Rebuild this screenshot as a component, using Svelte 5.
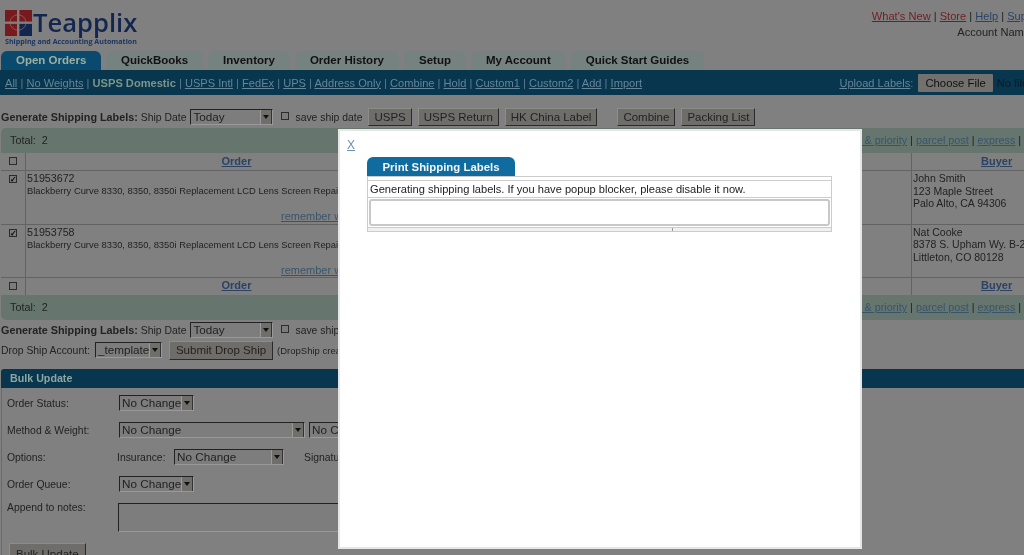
<script>
	const navLinks = ['USPS Intl', 'FedEx', 'UPS', 'Address Only', 'Combine', 'Hold', 'Custom1', 'Custom2', 'Add', 'Import'];
	const tabs = ['QuickBooks', 'Inventory', 'Order History', 'Setup', 'My Account', 'Quick Start Guides'];
	const orders = [
		{ id: '51953672', buyer: ['John Smith', '123 Maple Street', 'Palo Alto, CA 94306'] },
		{ id: '51953758', buyer: ['Nat Cooke', '8378 S. Upham Wy. B-201', 'Littleton, CO 80128'] }
	];
</script>

{#snippet select(label, size)}
	<span class="sel {size}"><span class="sel-text">{label}</span><span class="sel-btn"></span></span>
{/snippet}

{#snippet shipRow()}
	<b>Generate Shipping Labels:</b> <span class="ship-date">Ship Date</span>
	{@render select('Today', 'today')}
	<span class="check save"></span><span class="save-text">save ship date</span>
{/snippet}

{#snippet totalBar(cls)}
	<div class="total {cls}">
		<span>Total:&nbsp; 2</span>
		<span class="filters"><a href="#f">first &amp; priority</a> | <a href="#p">parcel post</a> | <a href="#e">express</a> | <a href="#a">all</a></span>
	</div>
{/snippet}

<div class="frame">
	<div class="page">
		<header class="top">
			<div class="logo">
				<div class="logo-main">
					<svg width="27" height="26" viewBox="0 0 27 27" preserveAspectRatio="none" aria-hidden="true">
						<rect width="27" height="27" fill="#761a1d" />
						<rect x="14" y="14" width="13" height="13" fill="#12264e" />
						<circle cx="13" cy="13" r="8" fill="none" stroke="#a77" stroke-width="0.6" />
						<rect x="12" width="2.4" height="27" fill="#808080" />
						<rect y="12" width="27" height="2.4" fill="#808080" />
					</svg>
					<span class="logo-name">Teapplix</span>
				</div>
				<div class="logo-tag">Shipping and Accounting Automation</div>
			</div>
			<div class="top-links">
				<div><a class="red" href="#n">What's New</a> | <a class="red" href="#s">Store</a> | <a href="#h">Help</a> | <a href="#u">Support</a></div>
				<div class="account">Account Name</div>
			</div>
		</header>

		<nav class="tabs">
			<span class="tab active">Open Orders</span>
			{#each tabs as tab}
				<span class="tab">{tab}</span>
			{/each}
		</nav>

		<div class="subnav">
			<div>
				<a href="#all">All</a> | <a href="#nw">No Weights</a> | <b>USPS Domestic</b>
				{#each navLinks as link}
					| <a href="#l">{link}</a>{' '}
				{/each}
			</div>
			<div class="upload">
				<span><a href="#up">Upload Labels</a>:</span> <span class="file-btn">Choose File</span> <span class="no-file">No file chosen</span>
			</div>
		</div>

		<div class="ship first">
			{@render shipRow()}
			<span class="btn">USPS</span>
			<span class="btn">USPS Return</span>
			<span class="btn">HK China Label</span>
			<span class="btn combine">Combine</span>
			<span class="btn">Packing List</span>
		</div>

		{@render totalBar('upper')}

		<div class="grid head">
			<div class="cell box"><span class="check"></span></div>
			<div class="cell title"><a href="#o">Order</a></div>
			<div class="cell"></div>
			<div class="cell title"><a href="#b">Buyer</a></div>
		</div>
		{#each orders as order}
			<div class="grid row">
				<div class="cell box"><span class="check on">✓</span></div>
				<div class="cell info">
					<div>{order.id}</div>
					<div class="small">Blackberry Curve 8330, 8350, 8350i Replacement LCD Lens Screen Repair Part</div>
					<a class="remember" href="#r">remember weight</a>
				</div>
				<div class="cell"></div>
				<div class="cell buyer">
					{#each order.buyer as line}
						<div>{line}</div>
					{/each}
				</div>
			</div>
		{/each}
		<div class="grid head foot">
			<div class="cell box"><span class="check"></span></div>
			<div class="cell title"><a href="#o">Order</a></div>
			<div class="cell"></div>
			<div class="cell title"><a href="#b">Buyer</a></div>
		</div>

		{@render totalBar('lower')}

		<div class="ship second">
			{@render shipRow()}
		</div>
		<div class="drop">
			<span>Drop Ship Account:</span>
			{@render select('_template', 'tpl')}
			<span class="btn submit">Submit Drop Ship</span>
			<span class="tiny">(DropShip creates orders with the supplier)</span>
		</div>

		<div class="bulk-title">Bulk Update</div>
		<div class="bulk">
			<div class="bulk-row">
				<span class="lbl">Order Status:</span>
				{@render select('No Change', 'nc')}
			</div>
			<div class="bulk-row">
				<span class="lbl">Method &amp; Weight:</span>
				{@render select('No Change', 'method')}
				{@render select('No Change', 'nc')}
			</div>
			<div class="bulk-row">
				<span class="lbl">Options:</span>
				<span class="ins">Insurance:</span>
				{@render select('No Change', 'insure')}
				<span class="sig">Signature:</span>
			</div>
			<div class="bulk-row">
				<span class="lbl">Order Queue:</span>
				{@render select('No Change', 'nc')}
			</div>
			<div class="bulk-row notes">
				<span class="lbl">Append to notes:</span>
				<span class="area"></span>
			</div>
			<span class="btn bulk-btn">Bulk Update</span>
		</div>
	</div>

	<div class="modal">
		<a class="close" href="#x">X</a>
		<div class="panel">
			<div class="panel-tab">Print Shipping Labels</div>
			<div class="panel-body">
				<div class="panel-cap"></div>
				<div class="panel-msg">Generating shipping labels. If you have popup blocker, please disable it now.</div>
				<div class="panel-slot"><div class="panel-inner"></div></div>
				<div class="panel-foot"><span></span><span></span></div>
			</div>
		</div>
	</div>
</div>

<style>
	:global(body) {
		margin: 0;
		background: #808080;
	}

	.frame {
		position: relative;
		width: 1024px;
		height: 555px;
		overflow: hidden;
		background: #808080;
		font-family: "Liberation Sans", Arial, sans-serif;
		font-size: 11.1px;
		color: #222;
		filter: blur(0.4px);
	}

	.page {
		width: 1060px;
	}

	a {
		color: #2b4264;
	}

	.top {
		height: 51px;
		display: flex;
		justify-content: space-between;
	}

	.logo {
		padding: 10px 0 0 5px;
	}

	.logo-main {
		display: flex;
		align-items: flex-start;
		height: 26px;
	}

	.logo-name {
		font-family: "Open Sans", sans-serif;
		font-weight: 600;
		font-size: 25.6px;
		line-height: 26px;
		color: #14264f;
		margin-left: 1px;
	}

	.logo-tag {
		font-family: "Open Sans", sans-serif;
		font-weight: 700;
		font-size: 7.1px;
		line-height: 10px;
		white-space: nowrap;
		color: #1b3565;
	}

	.top-links {
		text-align: right;
		padding: 9px 14px 0 0;
		line-height: 15px;
	}

	.top-links .red {
		color: #741c20;
	}

	.account {
		margin-top: 1px;
		padding-right: 16px;
	}

	.tabs {
		display: flex;
		gap: 5px;
		height: 19px;
		padding-left: 1px;
	}

	.tab {
		padding: 0 15px;
		border-radius: 6px 6px 0 0;
		background: #76827f;
		font-weight: bold;
		font-size: 11.5px;
		line-height: 19px;
		color: #111;
		white-space: nowrap;
	}

	.tab.active {
		background: #0a4a6e;
		color: #9db09f;
		width: 70px;
		text-align: center;
	}

	.subnav {
		height: 25px;
		background: #07364e;
		color: #5f7c8e;
		display: flex;
		justify-content: space-between;
		align-items: center;
		padding: 0 0 0 5px;
		white-space: nowrap;
		overflow: hidden;
	}

	.subnav a {
		color: #64859a;
	}

	.subnav b {
		color: #7c9587;
	}

	.upload {
		display: flex;
		align-items: center;
		flex-shrink: 0;
		gap: 3px;
		margin-right: -7px;
	}

	.file-btn {
		background: #72716e;
		color: #111;
		height: 18px;
		line-height: 18px;
		padding: 0 7px;
		border-radius: 1px;
		margin-left: 2px;
		font-size: 11.3px;
	}

	.no-file {
		color: #0a1a26;
		margin-left: 1px;
	}

	.ship {
		display: flex;
		align-items: center;
		padding-left: 1px;
		white-space: nowrap;
		height: 18px;
		font-size: 10.8px;
	}

	.ship.first {
		margin-top: 13px;
		margin-bottom: 2px;
	}

	.ship.second {
		margin-top: 1px;
	}

	.ship-date {
		margin-left: 3px;
		font-size: 10.4px;
	}

	.sel {
		display: inline-flex;
		align-items: stretch;
		box-sizing: border-box;
		height: 16px;
		border: 1px solid;
		border-color: #222 #999 #999 #222;
		background: #7d7d7d;
		color: #222;
		line-height: 14px;
		font-size: 11.7px;
		font-weight: normal;
	}

	.sel-text {
		flex: 1;
		padding-left: 2px;
		overflow: hidden;
		white-space: nowrap;
	}

	.sel-btn {
		width: 12px;
		position: relative;
		background: #706e6a;
		border-left: 1px solid #9a9a96;
		border-right: 1px solid #333;
		box-sizing: border-box;
	}

	.sel-btn::after {
		content: '';
		position: absolute;
		left: 2px;
		top: 5px;
		border: 3px solid transparent;
		border-top: 4px solid #111;
		border-bottom: 0;
	}

	.sel.today {
		width: 83px;
		margin-left: 4px;
	}

	.sel.tpl {
		width: 67px;
		margin-left: 5px;
	}

	.sel.nc {
		width: 75px;
	}

	.sel.method {
		width: 186px;
		margin-right: 4px;
	}

	.sel.insure {
		width: 110px;
		margin-left: 9px;
	}

	.check {
		display: inline-block;
		box-sizing: border-box;
		width: 8px;
		height: 8px;
		border: 1px solid #2c2c2c;
		background: #7c7c7c;
		font-size: 8px;
		line-height: 7px;
		text-align: center;
		font-weight: bold;
		color: #000;
	}

	.check.save {
		margin-left: 8px;
		margin-right: 1px;
		margin-top: -2px;
	}

	.save-text {
		margin-left: 5px;
		margin-right: 6px;
		font-size: 10.4px;
	}

	.btn {
		display: inline-block;
		box-sizing: border-box;
		height: 18px;
		line-height: 16px;
		padding: 0 5px;
		background: #6f6d69;
		border: 1px solid;
		border-color: #8c8c88 #2a2a2a #2a2a2a #8c8c88;
		color: #222;
		margin-right: 6px;
		white-space: nowrap;
		font-size: 11.5px;
		font-weight: normal;
	}

	.btn.combine {
		margin-left: 14px;
	}

	.total {
		display: flex;
		justify-content: space-between;
		height: 25px;
		line-height: 25px;
		background: #66766f;
		padding: 0 0 0 9px;
		margin-left: 1px;
		white-space: nowrap;
		font-size: 10.8px;
	}

	.total.upper {
		border-radius: 5px 5px 0 0;
	}

	.total.lower {
		border-radius: 0 0 5px 5px;
	}

	.filters {
		margin-right: 25px;
	}

	.filters a {
		color: #38546a;
	}

	.grid {
		display: grid;
		grid-template-columns: 24px 422px 464px 1fr;
		border-bottom: 1px solid #636363;
		margin-left: 1px;
		box-sizing: border-box;
	}

	.cell {
		border-left: 1px solid #636363;
		min-width: 0;
	}

	.cell:first-child,
	.cell:nth-child(3) {
		border-left: 0;
	}

	.head {
		height: 18px;
		line-height: 17px;
		font-size: 11px;
	}

	.foot {
		height: 17px;
		line-height: 15px;
		border-bottom: 0;
	}

	.title {
		text-align: center;
		font-weight: bold;
	}

	.title:last-child {
		text-align: left;
		padding-left: 69px;
	}

	.box {
		display: flex;
		justify-content: center;
		align-items: flex-start;
		padding-top: 4px;
		box-sizing: border-box;
		height: 100%;
	}

	.row {
		height: 53.5px;
		line-height: 13px;
		font-size: 10.7px;
	}

	.info,
	.buyer {
		padding: 1px 0 0 1px;
		white-space: nowrap;
		overflow: hidden;
	}

	.small {
		font-size: 9.4px;
		line-height: 12px;
	}

	.remember {
		display: block;
		margin: 13px 0 0 254px;
		color: #38546a;
		font-size: 11px;
	}

	.buyer {
		line-height: 12.5px;
		font-size: 10.5px;
	}

	.drop {
		display: flex;
		align-items: center;
		height: 20px;
		margin-top: 1px;
		padding-left: 1px;
		white-space: nowrap;
		font-size: 10.4px;
	}

	.btn.submit {
		height: 19px;
		line-height: 17px;
		padding: 0 6px;
		margin-left: 7px;
		margin-right: 4px;
	}

	.tiny {
		font-size: 9.5px;
	}

	.bulk-title {
		margin: 9px 0 0 1px;
		height: 19px;
		line-height: 18px;
		padding-left: 9px;
		background: #07364e;
		color: #8ea6a0;
		font-weight: bold;
		font-size: 10.7px;
		border-radius: 3px 0 0 0;
	}

	.bulk {
		border-left: 1px solid #6a6a6a;
		margin-left: 1px;
		padding: 7px 0 0 5px;
	}

	.bulk-row {
		display: flex;
		align-items: center;
		height: 16px;
		margin-bottom: 11px;
		white-space: nowrap;
		font-size: 10.4px;
	}

	.lbl {
		width: 112px;
		flex-shrink: 0;
	}

	.ins {
		margin-left: -2px;
		width: 48px;
	}

	.sig {
		margin-left: 20px;
	}

	.notes {
		align-items: flex-start;
		height: 29px;
	}

	.notes .lbl {
		margin-top: -1px;
	}

	.area {
		box-sizing: border-box;
		width: 500px;
		height: 29px;
		margin-left: -1px;
		border: 1px solid;
		border-color: #222 #999 #999 #222;
		background: #7d7d7d;
	}

	.bulk-btn {
		margin-left: 2px;
		height: 22px;
		line-height: 20px;
		padding: 0 6px;
	}

	/* popup sits over the dimmed page */
	.modal {
		position: absolute;
		left: 338px;
		top: 129px;
		box-sizing: border-box;
		width: 524px;
		height: 420px;
		background: #fff;
		border: 2px solid #e6e6e6;
		color: #222;
	}

	.close {
		display: block;
		margin: 8px 0 0 7px;
		width: 10px;
		line-height: 13px;
		font-size: 12px;
		color: #6f8fb0;
	}

	.panel {
		width: 465px;
		margin: 5px 0 0 27px;
	}

	.panel-tab {
		width: 148px;
		height: 19px;
		line-height: 20px;
		background: #106b9e;
		color: #f2f6f8;
		font-weight: bold;
		font-size: 11.4px;
		text-align: center;
		border-radius: 6px 6px 0 0;
	}

	.panel-body {
		border: 1px solid #ccc;
		box-sizing: border-box;
	}

	.panel-cap {
		height: 3px;
		border-bottom: 1px solid #ccc;
	}

	.panel-msg {
		height: 16px;
		line-height: 16px;
		padding-left: 2px;
		border-bottom: 1px solid #ccc;
	}

	.panel-slot {
		padding: 1px;
		border-bottom: 1px solid #ccc;
	}

	.panel-inner {
		height: 23px;
		border: 2px solid #c8c8c8;
		border-radius: 3px;
	}

	.panel-foot {
		height: 3px;
		display: flex;
		background: #f0f0f0;
	}

	.panel-foot span:first-child {
		width: 304px;
		border-right: 1px solid #999;
	}
</style>
